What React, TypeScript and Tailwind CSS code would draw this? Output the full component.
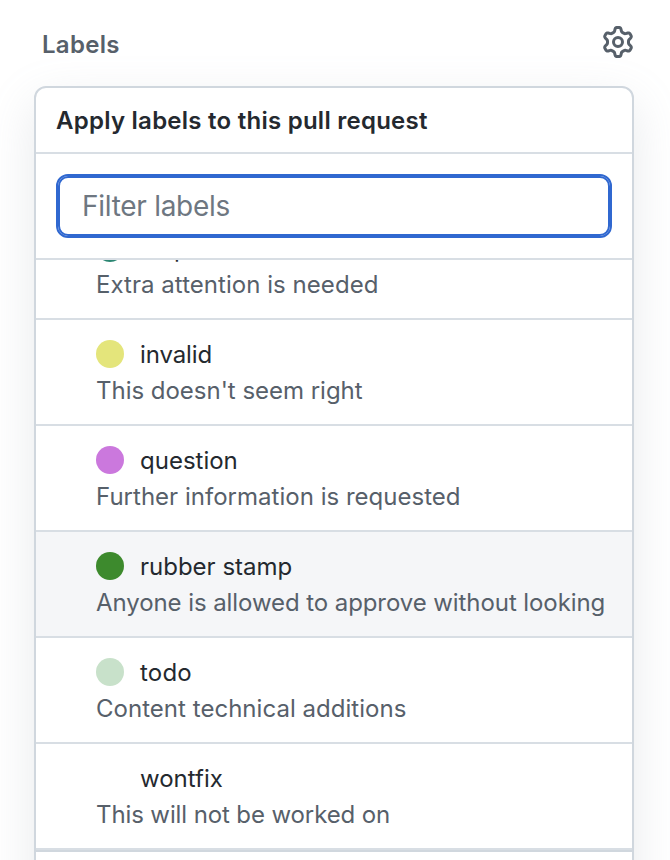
import React from "react";

type Label = { name: string; description: string; dot: string; tracking: string; nameTracking?: string; active?: boolean };

const labels: Label[] = [
  { name: "help wanted", description: "Extra attention is needed", dot: "bg-[#2b8672]", tracking: "tracking-[0.04px]" },
  { name: "invalid", description: "This doesn't seem right", dot: "bg-[#e4e57b]", tracking: "tracking-[-0.02px]", nameTracking: "tracking-[-0.1px]" },
  { name: "question", description: "Further information is requested", dot: "bg-[#cb78dd]", tracking: "tracking-[0.02px]" },
  { name: "rubber stamp", description: "Anyone is allowed to approve without looking", dot: "bg-[#3d8a2d]", tracking: "tracking-[-0.08px]", active: true },
  { name: "todo", description: "Content technical additions", dot: "bg-[#c8e1ca]", tracking: "tracking-[0.03px]", nameTracking: "tracking-[0.2px]" },
  { name: "wontfix", description: "This will not be worked on", dot: "bg-white", tracking: "tracking-[-0.11px]" },
];

function GearIcon() {
  return (
    <svg width="32" height="32" viewBox="0 0 16 16" fill="#57606a" aria-hidden="true">
      <path d="M8 0a8.2 8.2 0 0 1 .701.031C9.444.095 9.99.645 10.16 1.29l.288 1.107c.018.066.079.158.212.224.231.114.454.243.668.386.123.082.233.09.299.071l1.103-.303c.644-.176 1.392.021 1.82.63.27.385.506.792.704 1.218.315.675.111 1.422-.364 1.891l-.814.806c-.049.048-.098.147-.088.294.016.257.016.515 0 .772-.01.147.038.246.088.294l.814.806c.475.469.679 1.216.364 1.891a7.977 7.977 0 0 1-.704 1.217c-.428.61-1.176.807-1.82.63l-1.102-.302c-.067-.019-.177-.011-.3.071a5.909 5.909 0 0 1-.668.386c-.133.066-.194.158-.211.224l-.29 1.106c-.168.646-.715 1.196-1.458 1.26a8.006 8.006 0 0 1-1.402 0c-.743-.064-1.289-.614-1.458-1.26l-.289-1.106c-.018-.066-.079-.158-.212-.224a5.738 5.738 0 0 1-.668-.386c-.123-.082-.233-.09-.299-.071l-1.103.303c-.644.176-1.392-.021-1.82-.63a8.12 8.12 0 0 1-.704-1.218c-.315-.675-.111-1.422.363-1.891l.815-.806c.05-.048.098-.147.088-.294a6.214 6.214 0 0 1 0-.772c.01-.147-.038-.246-.088-.294l-.815-.806C.635 6.045.431 5.298.746 4.623a7.92 7.92 0 0 1 .704-1.217c.428-.61 1.176-.807 1.82-.63l1.102.302c.067.019.177.011.3-.071.214-.143.437-.272.668-.386.133-.066.194-.158.211-.224l.29-1.106C6.009.645 6.556.095 7.299.03 7.53.01 7.764 0 8 0Zm-.571 1.525c-.036.003-.108.036-.137.146l-.289 1.105c-.147.561-.549.967-.998 1.189-.173.086-.34.183-.5.29-.417.278-.97.423-1.529.27l-1.103-.303c-.109-.03-.175.016-.195.045-.22.312-.412.644-.573.99-.014.031-.021.11.059.19l.815.806c.411.406.562.957.53 1.456a4.709 4.709 0 0 0 0 .582c.032.499-.119 1.05-.53 1.456l-.815.806c-.081.08-.073.159-.059.19.162.346.353.677.573.989.02.03.085.076.195.046l1.102-.303c.56-.153 1.113-.008 1.53.27.161.107.328.204.501.29.447.222.85.629.997 1.189l.289 1.105c.029.109.101.143.137.146a6.6 6.6 0 0 0 1.142 0c.036-.003.108-.036.137-.146l.289-1.105c.147-.561.549-.967.998-1.189.173-.086.34-.183.5-.29.417-.278.97-.423 1.529-.27l1.103.303c.109.029.175-.016.195-.045.22-.313.411-.644.573-.99.014-.031.021-.11-.059-.19l-.815-.806c-.411-.406-.562-.957-.53-1.456a4.709 4.709 0 0 0 0-.582c-.032-.499.119-1.05.53-1.456l.815-.806c.081-.08.073-.159.059-.19a6.464 6.464 0 0 0-.573-.989c-.02-.03-.085-.076-.195-.046l-1.102.303c-.56.153-1.113.008-1.53-.27a4.44 4.44 0 0 0-.501-.29c-.447-.222-.85-.629-.997-1.189l-.289-1.105c-.029-.11-.101-.143-.137-.146a6.6 6.6 0 0 0-1.142 0ZM11 8a3 3 0 1 1-6 0 3 3 0 0 1 6 0ZM9.5 8a1.5 1.5 0 1 0-3.001.001A1.5 1.5 0 0 0 9.5 8Z" />
    </svg>
  );
}

export default function App() {
  return (
    <main className="h-[860px] w-[670px] overflow-hidden bg-white font-[Inter,sans-serif] text-[#24292f]">
      <header className="flex h-[86px] items-start justify-between pl-[42px] pr-9 pt-[26px]">
        <h2 className="pt-[1px] text-[24px] font-semibold leading-9 tracking-[0.3px] text-[#57606a]">Labels</h2>
        <GearIcon />
      </header>
      <section className="ml-[34px] h-[900px] w-[600px] overflow-hidden rounded-xl border-2 border-[#d0d7de] bg-white shadow-[0_16px_48px_rgba(140,149,159,0.2)]">
        <h3 className="flex h-[66px] items-center border-b-2 border-[#d8dee4] pl-5 pt-0.5 text-[24px] font-semibold tracking-[0.25px]">Apply labels to this pull request</h3>
        <div className="h-[106px] border-b-2 border-[#d8dee4] p-5">
          <input
            aria-label="Filter labels"
            placeholder="Filter labels"
            className="block h-16 w-full rounded-xl border-2 border-[#3068d0] px-6 text-[28px] tracking-[-0.28px] shadow-[inset_0_0_0_2px_#3068d0] outline-none placeholder:text-[#6e7781]"
          />
        </div>
        <div className="flex h-[592px] flex-col justify-end overflow-hidden border-b-2 border-[#d0d7de]">
          {labels.map((label) => (
            <div key={label.name} className={`h-[106px] shrink-0 border-b-2 border-[#d8dee4] pl-[60px] pt-[17px] ${label.active ? "bg-[#f5f6f8]" : ""}`}>
              <div className="flex h-9 items-center gap-4">
                <span className={`-mt-0.5 size-7 rounded-full ${label.dot}`} />
                <span className={`text-[24px] leading-9 ${label.nameTracking ?? ""}`}>{label.name}</span>
              </div>
              <p className={`whitespace-nowrap text-[24px] leading-9 text-[#57606a] ${label.tracking}`}>{label.description}</p>
            </div>
          ))}
        </div>
      </section>
    </main>
  );
}
